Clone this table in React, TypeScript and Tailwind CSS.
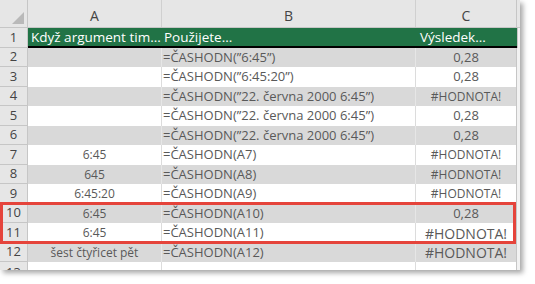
import React from "react";

type Row = {
  n: number;
  a: string;
  b: string;
  c: string;
  cSize: "s" | "m" | "l";
};

const rows: Row[] = [
  { n: 2, a: "", b: "=ČASHODN(\u201d6:45\u201d)", c: "0,28", cSize: "m" },
  { n: 3, a: "", b: "=ČASHODN(\u201d6:45:20\u201d)", c: "0,28", cSize: "m" },
  { n: 4, a: "", b: "=ČASHODN(\u201d22. června 2000 6:45\u201d)", c: "#HODNOTA!", cSize: "s" },
  { n: 5, a: "", b: "=ČASHODN(\u201d22. června 2000 6:45\u201d)", c: "0,28", cSize: "m" },
  { n: 6, a: "", b: "=ČASHODN(\u201d22. června 2000 6:45\u201d)", c: "0,28", cSize: "m" },
  { n: 7, a: "6:45", b: "=ČASHODN(A7)", c: "#HODNOTA!", cSize: "s" },
  { n: 8, a: "645", b: "=ČASHODN(A8)", c: "#HODNOTA!", cSize: "s" },
  { n: 9, a: "6:45:20", b: "=ČASHODN(A9)", c: "#HODNOTA!", cSize: "s" },
  { n: 10, a: "6:45", b: "=ČASHODN(A10)", c: "0,28", cSize: "m" },
  { n: 11, a: "6:45", b: "=ČASHODN(A11)", c: "#HODNOTA!", cSize: "l" },
  { n: 12, a: "šest čtyřicet pět", b: "=ČASHODN(A12)", c: "#HODNOTA!", cSize: "l" },
];

const cSizeClass = { s: "text-[12px]", m: "text-[13px]", l: "text-[14px]" };

export default function App() {
  return (
    <div
      className="relative w-[535px] h-[284px] bg-white overflow-hidden"
      style={{ fontFamily: '"Open Sans", "Noto Sans", sans-serif' }}
    >
      <div className="relative w-[520px] h-[270px] bg-white overflow-hidden shadow-[3px_3px_5px_rgba(0,0,0,0.35)]">
        {/* column header */}
        <div className="flex h-[28px] bg-[#e6e6e6] border-b border-[#c6c6c6] text-[14px] text-[#444]">
          <div className="relative w-[28px] shrink-0 border-r border-[#c6c6c6]">
            <svg className="absolute right-[3px] bottom-[3px]" width="12" height="12" viewBox="0 0 12 12">
              <polygon points="12,0 12,12 0,12" fill="#b9b9b9" />
            </svg>
          </div>
          <div className="w-[134px] shrink-0 border-r border-[#d0d0d0] flex items-end justify-center pb-[1px]">A</div>
          <div className="w-[254px] shrink-0 border-r border-[#d0d0d0] flex items-end justify-center pb-[1px]">B</div>
          <div className="w-[101px] shrink-0 border-r border-[#c6c6c6] flex items-end justify-center pb-[1px]">C</div>
          <div className="flex-1" />
        </div>

        {/* row 1 header */}
        <div className="flex h-[20px] text-[13.5px]">
          <div className="w-[28px] shrink-0 bg-[#e6e6e6] border-r border-b border-[#c6c6c6] flex items-center justify-center text-[13px] text-[#444]">
            1
          </div>
          <div className="flex w-[489px] shrink-0 bg-[#217346] text-white border-b-2 border-black">
            <div className="w-[134px] shrink-0 pl-[3px] flex items-center whitespace-nowrap">Když argument tim...</div>
            <div className="w-[254px] shrink-0 pl-[2px] flex items-center whitespace-nowrap">Použijete...</div>
            <div className="w-[101px] shrink-0 pl-[4px] flex items-center whitespace-nowrap">Výsledek...</div>
          </div>
          <div className="flex-1 border-l border-[#c6c6c6] bg-[#f2f2f2]" />
        </div>

        {rows.map((r, i) => {
          const gray = r.n % 2 === 0;
          const h = i % 2 === 0 ? "h-[19px]" : "h-[20px]";
          const bg = gray ? "bg-[#d9d9d9]" : "bg-white";
          const vb = gray ? "border-[#e6e6e6]" : "border-[#dcdcdc]";
          return (
            <div key={r.n} className={`flex ${h}`}>
              <div className="w-[28px] shrink-0 bg-[#e6e6e6] border-r border-b border-[#c6c6c6] flex items-center justify-center text-[13px] text-[#444]">
                {r.n}
              </div>
              <div className={`flex w-[489px] shrink-0 ${bg} text-[#595959]`}>
                <div className={`w-[134px] shrink-0 border-r ${vb} flex items-center justify-center whitespace-nowrap text-[12px]`}>
                  {r.a}
                </div>
                <div className={`w-[254px] shrink-0 border-r ${vb} pl-[1px] flex items-center whitespace-nowrap text-[13px]`}>
                  {r.b}
                </div>
                <div
                  className={`w-[101px] shrink-0 border-r border-[#c6c6c6] flex items-center justify-center whitespace-nowrap ${cSizeClass[r.cSize]}`}
                >
                  {r.c}
                </div>
              </div>
              <div className="flex-1 bg-[#f2f2f2]" />
            </div>
          );
        })}

        {/* partial row 13 */}
        <div className="flex h-[10px]">
          <div className="w-[28px] shrink-0 bg-[#e6e6e6] border-r border-[#c6c6c6] overflow-hidden flex justify-center text-[13px] text-[#444] leading-[20px]">
            13
          </div>
          <div className="flex w-[489px] shrink-0 bg-white">
            <div className="w-[134px] shrink-0 border-r border-[#dcdcdc]" />
            <div className="w-[254px] shrink-0 border-r border-[#dcdcdc]" />
            <div className="w-[101px] shrink-0 border-r border-[#c6c6c6]" />
          </div>
          <div className="flex-1 bg-[#f2f2f2]" />
        </div>
      </div>

      {/* highlight box */}
      <div className="absolute left-0 top-[202px] w-[516px] h-[42px] border-[3px] border-[#e5443b]" />
    </div>
  );
}
